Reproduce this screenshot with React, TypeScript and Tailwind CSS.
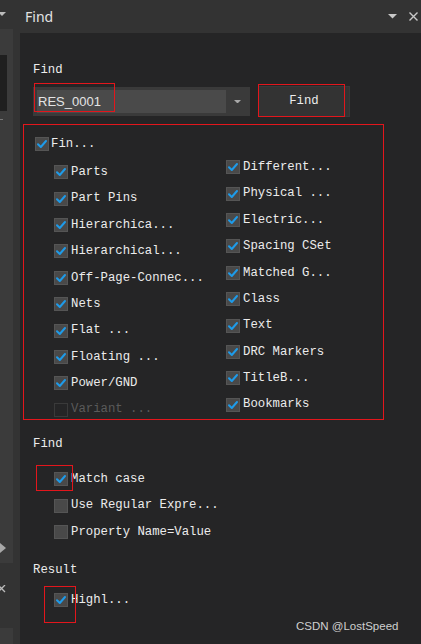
import type { ReactNode } from "react";

type BoxProps = { checked?: boolean; disabled?: boolean };

function Box({ checked, disabled }: BoxProps) {
  return (
    <span
      className={
        disabled
          ? "flex h-[14px] w-[14px] shrink-0 items-center justify-center border border-[#3a3a3a]"
          : "flex h-[14px] w-[14px] shrink-0 items-center justify-center border border-[#555555] bg-[#494949]"
      }
    >
      {checked ? (
        <svg width="12" height="12" viewBox="0 0 12 12" fill="none">
          <path d="M2 6.2 L4.8 9 L10 3" stroke="#1e9be9" strokeWidth="2" strokeLinecap="round" strokeLinejoin="round" />
        </svg>
      ) : null}
    </span>
  );
}

function Row({ label, checked = true, disabled }: { label: string; checked?: boolean; disabled?: boolean }) {
  return (
    <div className="flex h-[26.4px] items-center">
      <Box checked={checked} disabled={disabled} />
      <span
        className={
          disabled
            ? "ml-[3px] whitespace-pre font-['Liberation_Mono',monospace] text-[12.3px] text-[#5a5a5a]"
            : "ml-[3px] whitespace-pre font-['Liberation_Mono',monospace] text-[12.3px] text-[#ececec]"
        }
      >
        {label}
      </span>
    </div>
  );
}

function Label({ children }: { children: ReactNode }) {
  return (
    <div className="h-[16px] font-['Liberation_Mono',monospace] text-[12.3px] leading-[16px] text-[#ececec]">
      {children}
    </div>
  );
}

function Caret({ size = 8, color = "#c8c8c8" }: { size?: number; color?: string }) {
  return (
    <svg width={size} height={size / 2} viewBox="0 0 8 4">
      <path d="M0 0 H8 L4 4 Z" fill={color} />
    </svg>
  );
}

const left = [
  "Parts",
  "Part Pins",
  "Hierarchica...",
  "Hierarchical...",
  "Off-Page-Connec...",
  "Nets",
  "Flat ...",
  "Floating ...",
  "Power/GND",
];

const right = [
  "Different...",
  "Physical ...",
  "Electric...",
  "Spacing CSet",
  "Matched G...",
  "Class",
  "Text",
  "DRC Markers",
  "TitleB...",
  "Bookmarks",
];

export default function App() {
  return (
    <div className="relative flex h-[644px] w-[421px] overflow-hidden bg-[#252526]">
      {/* neighbouring docked panel, cut off */}
      <div className="flex w-[20px] shrink-0 flex-col bg-[#333333]">
        <div className="h-[29px] pt-[12px]">
          <svg width="6" height="4" viewBox="0 0 6 4">
            <path d="M-2 0 H6 L2 4 Z" fill="#bbbbbb" />
          </svg>
        </div>
        <div className="flex flex-1">
          <div className="flex w-[13px] flex-col">
            <div className="flex h-[534px] flex-col bg-[#3b3b3b]">
              <div className="mt-[26px] h-[56px] w-[7px] bg-[#1f1f1f]" />
              <div className="mt-[8px] h-[1px] w-[3px] bg-[#777777]" />
              <div className="flex-1" />
              <svg className="mb-[10px]" width="6" height="10" viewBox="0 0 6 10">
                <path d="M0 0 L6 5 L0 10 Z" fill="#a8a8a8" />
              </svg>
            </div>
            <svg className="mt-[22px]" width="6" height="8" viewBox="0 0 6 8">
              <path d="M-2 0 L5 7 M5 0 L-2 7" stroke="#bbbbbb" strokeWidth="1.3" />
            </svg>
            <div className="flex-1" />
            <div className="h-[16px] bg-[#3b3b3b]" />
          </div>
          <div className="w-[7px]" />
        </div>
      </div>

      <div className="flex flex-1 flex-col">
        <div className="flex h-[33px] shrink-0 items-center bg-[#333333] pl-[5px] pr-[3px]">
          <span className="font-['Noto_Sans',sans-serif] text-[14px] text-[#e2e2e2]">Find</span>
          <span className="ml-auto">
            <Caret size={9} />
          </span>
          <svg className="ml-[12px]" width="9" height="9" viewBox="0 0 9 9">
            <path d="M0.5 0.5 L8.5 8.5 M8.5 0.5 L0.5 8.5" stroke="#c8c8c8" strokeWidth="1.4" />
          </svg>
        </div>

        <div className="flex flex-1 flex-col pl-[13px]">
          <div className="mt-[29px]">
            <Label>Find</Label>
          </div>

          <div className="mt-[8px] flex h-[31px] items-center">
            <div className="flex h-[29px] w-[217px] items-center bg-[#3a3a3a]">
              <div className="ml-[4px] flex h-[23px] w-[189px] items-center bg-[#4a4a4a] pl-[1px] font-['Liberation_Sans',sans-serif] text-[13px] text-[#e4e4e4]">
                RES_0001
              </div>
              <span className="ml-[8px] flex">
                <Caret size={7} color="#a8a8a8" />
              </span>
            </div>
            <button
              type="button"
              className="ml-[8px] h-[31px] w-[92px] border border-[#393939] bg-[#333333] font-['Liberation_Mono',monospace] text-[12.3px] text-[#ececec]"
            >
              Find
            </button>
          </div>

          <div className="ml-[-10px] mt-[7px] h-[296px] w-[361px] border border-[#e3161c]">
            <div className="mt-[9px] flex h-[20px] items-center pl-[11px]">
              <Box checked />
              <span className="ml-[2px] font-['Liberation_Mono',monospace] text-[12.3px] text-[#ececec]">Fin...</span>
            </div>
            <div className="flex pl-[30px]">
              <div className="w-[172px] pt-[5px]">
                {left.map((l) => (
                  <Row key={l} label={l} />
                ))}
                <Row label="Variant ..." checked={false} disabled />
              </div>
              <div className="flex-1">
                {right.map((r) => (
                  <Row key={r} label={r} />
                ))}
              </div>
            </div>
          </div>

          <div className="mt-[16px]">
            <Label>Find</Label>
          </div>
          <div className="mt-[14px] pl-[21px]">
            <Row label="Match case" />
            <Row label="Use Regular Expre..." checked={false} />
            <Row label="Property Name=Value" checked={false} />
          </div>

          <div className="mt-[17px]">
            <Label>Result</Label>
          </div>
          <div className="mt-[9px] pl-[21px]">
            <Row label="Highl..." />
          </div>
        </div>
      </div>

      {/* annotation boxes */}
      <div className="pointer-events-none absolute left-[34px] top-[83px] h-[29px] w-[81px] border border-[#e3161c]" />
      <div className="pointer-events-none absolute left-[258px] top-[84px] h-[33px] w-[87px] border border-[#e3161c]" />
      <div className="pointer-events-none absolute left-[36px] top-[465px] h-[26px] w-[37px] border border-[#e3161c]" />
      <div className="pointer-events-none absolute left-[44px] top-[586px] h-[37px] w-[32px] border border-[#e3161c]" />

      <div className="pointer-events-none absolute left-[296px] top-[618px] font-['Liberation_Sans',sans-serif] text-[11.5px] text-[#cfcfcf]">
        CSDN @LostSpeed
      </div>
    </div>
  );
}
